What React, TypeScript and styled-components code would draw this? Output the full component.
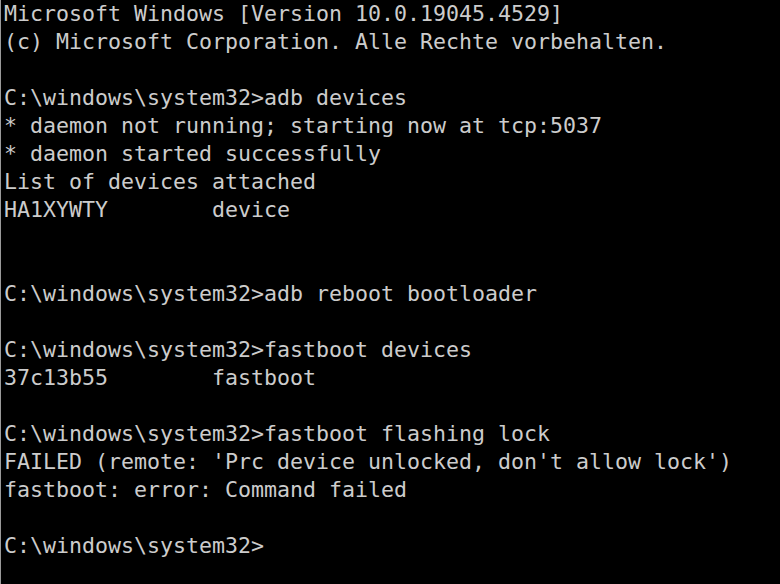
import React from "react";
import styled, { createGlobalStyle } from "styled-components";

const Global = createGlobalStyle`
  html, body { margin: 0; padding: 0; background: #000; }
  body { width: 780px; height: 584px; overflow: hidden; }
`;

const Console = styled.div`
  box-sizing: border-box;
  width: 780px;
  height: 584px;
  background: #000;
  border-left: 1px solid #9a9a9a;
  padding: 0 0 0 3px;
  display: flex;
  flex-direction: column;
`;

const Line = styled.div`
  font-family: "DejaVu Sans Mono", "Liberation Mono", monospace;
  font-size: 21.6px;
  line-height: 28px;
  height: 28px;
  color: #cccccc;
  white-space: pre;
`;

const lines = [
  "Microsoft Windows [Version 10.0.19045.4529]",
  "(c) Microsoft Corporation. Alle Rechte vorbehalten.",
  "",
  "C:\\windows\\system32>adb devices",
  "* daemon not running; starting now at tcp:5037",
  "* daemon started successfully",
  "List of devices attached",
  "HA1XYWTY        device",
  "",
  "",
  "C:\\windows\\system32>adb reboot bootloader",
  "",
  "C:\\windows\\system32>fastboot devices",
  "37c13b55        fastboot",
  "",
  "C:\\windows\\system32>fastboot flashing lock",
  "FAILED (remote: 'Prc device unlocked, don't allow lock')",
  "fastboot: error: Command failed",
  "",
  "C:\\windows\\system32>",
];

export default function App() {
  return (
    <>
      <Global />
      <Console>
        {lines.map((l, i) => (
          <Line key={i}>{l}</Line>
        ))}
      </Console>
    </>
  );
}
